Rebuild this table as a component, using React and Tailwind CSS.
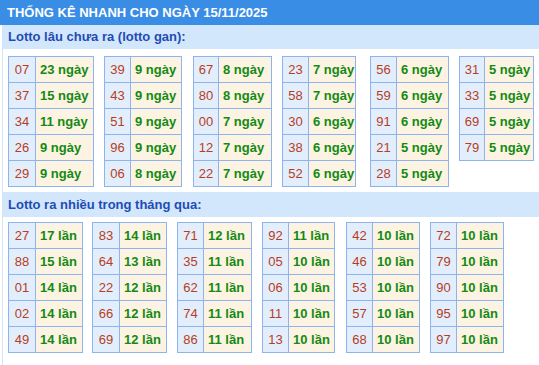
import React from 'react';

const ganTables = [
    {
        ml: 'ml-0', nw: 'w-[27px]', vw: 'w-[58px]',
        rows: [['07', '23 ngày'], ['37', '15 ngày'], ['34', '11 ngày'], ['26', '9 ngày'], ['29', '9 ngày']],
    },
    {
        ml: 'ml-[10px]', nw: 'w-[26px]', vw: 'w-[51px]',
        rows: [['39', '9 ngày'], ['43', '9 ngày'], ['51', '9 ngày'], ['96', '9 ngày'], ['06', '8 ngày']],
    },
    {
        ml: 'ml-[11px]', nw: 'w-[25px]', vw: 'w-[53px]',
        rows: [['67', '8 ngày'], ['80', '8 ngày'], ['00', '7 ngày'], ['12', '7 ngày'], ['22', '7 ngày']],
    },
    {
        ml: 'ml-[10px]', nw: 'w-[26px]', vw: 'w-[47px]',
        rows: [['23', '7 ngày'], ['58', '7 ngày'], ['30', '6 ngày'], ['38', '6 ngày'], ['52', '6 ngày']],
    },
    {
        ml: 'ml-[14px]', nw: 'w-[26px]', vw: 'w-[52px]',
        rows: [['56', '6 ngày'], ['59', '6 ngày'], ['91', '6 ngày'], ['21', '5 ngày'], ['28', '5 ngày']],
    },
    {
        ml: 'ml-[10px]', nw: 'w-[25px]', vw: 'w-[49px]',
        rows: [['31', '5 ngày'], ['33', '5 ngày'], ['69', '5 ngày'], ['79', '5 ngày']],
    },
];

const monthTables = [
    {
        ml: 'ml-0', nw: 'w-[27px]', vw: 'w-[47px]',
        rows: [['27', '17 lần'], ['88', '15 lần'], ['01', '14 lần'], ['02', '14 lần'], ['49', '14 lần']],
    },
    {
        ml: 'ml-[9px]', nw: 'w-[27px]', vw: 'w-[47px]',
        rows: [['83', '14 lần'], ['64', '13 lần'], ['22', '12 lần'], ['66', '12 lần'], ['69', '12 lần']],
    },
    {
        ml: 'ml-[10px]', nw: 'w-[26px]', vw: 'w-[48px]',
        rows: [['71', '12 lần'], ['35', '11 lần'], ['62', '11 lần'], ['74', '11 lần'], ['86', '11 lần']],
    },
    {
        ml: 'ml-[10px]', nw: 'w-[26px]', vw: 'w-[46px]',
        rows: [['92', '11 lần'], ['05', '10 lần'], ['06', '10 lần'], ['11', '10 lần'], ['13', '10 lần']],
    },
    {
        ml: 'ml-[11px]', nw: 'w-[26px]', vw: 'w-[47px]',
        rows: [['42', '10 lần'], ['46', '10 lần'], ['53', '10 lần'], ['57', '10 lần'], ['68', '10 lần']],
    },
    {
        ml: 'ml-[10px]', nw: 'w-[26px]', vw: 'w-[47px]',
        rows: [['72', '10 lần'], ['79', '10 lần'], ['90', '10 lần'], ['95', '10 lần'], ['97', '10 lần']],
    },
];

const LottoTable = ({ table }) => (
    <div className={`${table.ml} border-l border-t border-[#8eb4ef] self-start`}>
        {table.rows.map(([num, val]) => (
            <div key={num} className="flex h-[26px]">
                <div className={`${table.nw} h-full flex items-center justify-center bg-[#e3eefd] border-r border-b border-[#8eb4ef] text-[#b63d22] text-[13px]`}>
                    {num}
                </div>
                <div className={`${table.vw} h-full flex items-center pl-[4px] bg-[#fdf3e2] border-r border-b border-[#8eb4ef] text-[#138a13] text-[13px] font-bold whitespace-nowrap`}>
                    {val}
                </div>
            </div>
        ))}
    </div>
);

const SubHeader = ({ children, className }) => (
    <div className={`${className} bg-[#d3e7fc] text-[#1f4cb5] text-[13px] font-bold pl-[5px] flex items-center`}>
        {children}
    </div>
);

export default function App() {
    return (
        <div className="w-[539px] h-[365px] bg-white overflow-hidden font-['Liberation_Sans',Arial,sans-serif]">
            {/* Title bar */}
            <div className="h-[25px] bg-[#3a8de5] text-white text-[13px] font-bold flex items-center pl-[7px]">
                THỐNG KÊ NHANH CHO NGÀY 15/11/2025
            </div>

            <div className="ml-[2px] h-[340px] border-l border-[#d3e5f7]">
                <SubHeader className="h-[24px]">Lotto lâu chưa ra (lotto gan):</SubHeader>

                <div className="flex pl-[5px] mt-[7px]">
                    {ganTables.map((t, i) => (
                        <LottoTable key={i} table={t} />
                    ))}
                </div>

                <SubHeader className="h-[25px] mt-[5px]">Lotto ra nhiều trong tháng qua:</SubHeader>

                <div className="flex pl-[5px] mt-[5px]">
                    {monthTables.map((t, i) => (
                        <LottoTable key={i} table={t} />
                    ))}
                </div>
            </div>
        </div>
    );
}
